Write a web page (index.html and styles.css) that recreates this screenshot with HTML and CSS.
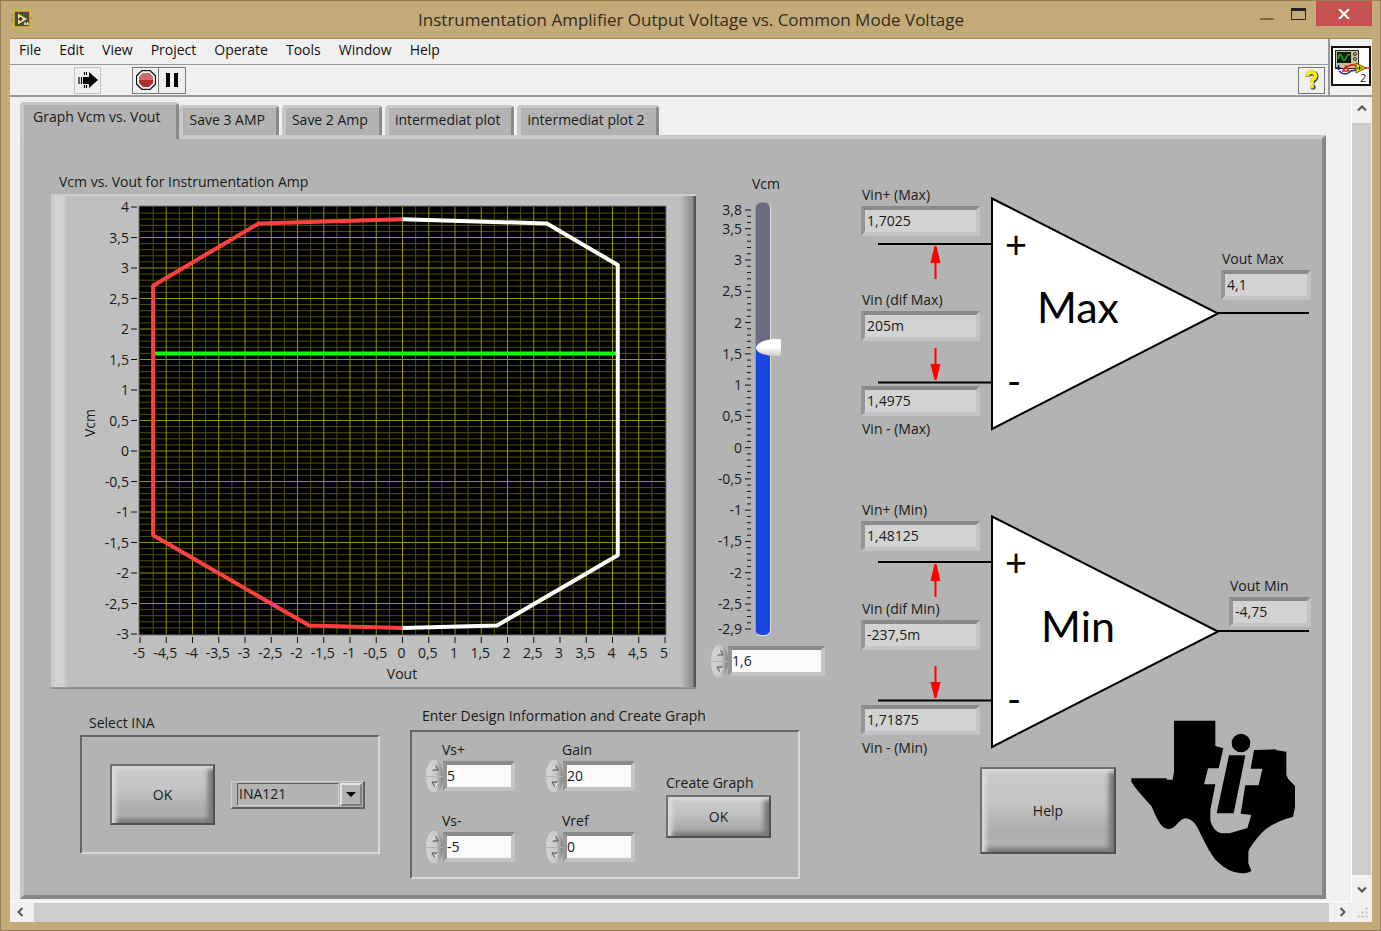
FILE: index.html
```html
<!DOCTYPE html>
<html lang="en">
<head>
  <meta charset="UTF-8" />
  <meta name="viewport" content="width=device-width, initial-scale=1.0" />
  <title>Instrumentation Amplifier Output Voltage vs. Common Mode Voltage</title>
  <link rel="stylesheet" href="styles.css">
</head>
<body>
  <header class="title-bar">
    <svg class="app-icon" viewBox="0 0 20 18" width="20" height="18" aria-hidden="true">
      <path d="M0 5h3M0 9h3M0 12h3M17 8h3" stroke="#5b8a8c" stroke-width="1.5" />
      <rect x="2" y="1" width="16" height="16" fill="#4a4a48" stroke="#e9b824" stroke-width="1.5" />
      <path d="M6 3.500v11l9-5.500z" fill="#f3dc83" />
      <path d="M6.500 9h4M8.500 7v4" stroke="#222" stroke-width="1.500" />
      <path d="M12 14h5M13 12v3M15.500 12v3" stroke="#fff3b0" />
    </svg>
    <h1>Instrumentation Amplifier Output Voltage vs. Common Mode Voltage</h1>
    <div class="window-buttons">
      <button class="win-btn" aria-label="Minimize"><svg width="14" height="12" viewBox="0 0 14 12"><path d="M0 11h14" stroke="#7d6a45" stroke-width="2" /></svg></button>
      <button class="win-btn" aria-label="Maximize"><svg width="15" height="12" viewBox="0 0 15 12"><path d="M.5 1v10.500h14V1" fill="none" stroke="#222" /><path d="M0 1.500h15" stroke="#222" stroke-width="3" /></svg></button>
      <button class="win-btn close" aria-label="Close"><svg width="12" height="10" viewBox="0 0 12 10"><path d="M1 0l10 10M11 0L1 10" stroke="#fff" stroke-width="2.200" /></svg></button>
    </div>
  </header>

  <div class="client">
    <div class="top-area">
      <div class="bars">
        <nav class="menu-bar">
          <a href="#">File</a>
          <a href="#">Edit</a>
          <a href="#">View</a>
          <a href="#">Project</a>
          <a href="#">Operate</a>
          <a href="#">Tools</a>
          <a href="#">Window</a>
          <a href="#">Help</a>
        </nav>
        <div class="toolbar">
          <button class="tool run" aria-label="Run">
            <svg width="20" height="18" viewBox="0 0 20 18"><path d="M1 6v7M3.500 6v7M6.500 1v3M8.500 1v3M6.500 14v3M8.500 14v3" stroke="#000" stroke-width="1.200" /><path d="M5 6h6V1l9 8-9 8v-4H5z" /></svg>
          </button>
          <div class="tool-pair">
            <button class="tool" aria-label="Abort">
              <svg width="20" height="20" viewBox="0 0 20 20"><path d="M6 .5h8L19.500 6v8L14 19.500H6L.5 14V6z" fill="#fff" stroke="#111" stroke-width="1.300" /><path d="M7 3h6l4 4v6l-4 4H7l-4-4V7z" fill="#b02d2d" /><path d="M7 3h6l4 4v3H3V7z" fill="#d26a6a" /></svg>
            </button>
            <button class="tool" aria-label="Pause">
              <svg width="12" height="14" viewBox="0 0 12 14"><path d="M0 0h4v14H0zM8 0h4v14H8z" /></svg>
            </button>
          </div>
          <button class="tool help-tool" aria-label="Context help">
            <svg width="14" height="20" viewBox="0 0 14 20"><path d="M3 6.500Q3 3 7 3t4 3.500Q11 9 8 10.500L7.500 13" fill="none" stroke="#444" stroke-width="5" /><circle cx="8" cy="17" r="2.600" fill="#444" /><path d="M2.500 6Q2.500 2.300 6.500 2.300T10.500 6Q10.500 8.500 7 10v3" fill="none" stroke="#f8ee00" stroke-width="3.500" /><circle cx="7" cy="16.500" r="2" fill="#f8ee00" /></svg>
          </button>
        </div>
      </div>
      <div class="vi-cell">
        <svg class="vi-icon" width="40" height="40" viewBox="0 0 40 40" role="img" aria-label="VI icon 2">
          <rect x="1" y="1" width="38" height="38" fill="#fff" stroke="#111" stroke-width="2" />
          <rect x="4.500" y="4.500" width="23" height="18" fill="#c9c39a" stroke="#222" />
          <rect x="6" y="6" width="14" height="11" fill="#0b1a0b" />
          <path d="M7 13q2-8 4-2t4 1 4-3" fill="none" stroke="#1fae35" stroke-width="1.500" />
          <circle cx="24" cy="8" r="1.500" fill="none" stroke="#333" /><circle cx="24" cy="13" r="1.500" fill="none" stroke="#333" />
          <path d="M5 22h5M7.500 19v5" stroke="#11118a" stroke-width="1.500" />
          <path d="M8 25q6 6 12 0l5-1" fill="none" stroke="#2020a0" stroke-width="1.500" />
          <path d="M12 25l3-5 3 5zM15 22q5-5 10-2M33 22h6" fill="none" stroke="#e02020" stroke-width="1.500" />
          <path d="M25 17v10l10-5z" fill="#f0e000" stroke="#5a5200" /><path d="M26 22h5M28.500 20v4" stroke="#222" />
          <text x="29" y="36">2</text>
        </svg>
      </div>
    </div>

    <div class="workspace">
      <main class="canvas">
        <div class="tabs" role="tablist">
          <button class="tab active" role="tab" aria-selected="true">Graph Vcm vs. Vout</button>
          <button class="tab" role="tab">Save 3 AMP</button>
          <button class="tab" role="tab">Save 2 Amp</button>
          <button class="tab" role="tab">intermediat plot</button>
          <button class="tab" role="tab">intermediat plot 2</button>
        </div>

        <div class="panel">
          <div class="left-col">
            <div class="graph-row">
              <section class="graph">
                <h2>Vcm vs. Vout for Instrumentation Amp</h2>
                <div class="graph-frame">
                  <svg id="plot" viewBox="0 0 613 491" role="img" aria-label="Vcm vs. Vout"></svg>
                </div>
              </section>
              <section class="vcm">
                <label class="vcm-label" for="vcmSlider">Vcm</label>
                <div class="slider">
                  <svg id="scale" width="44" height="442" viewBox="0 -4 44 442" aria-hidden="true"></svg>
                  <input type="range" id="vcmSlider" min="-2.9" max="3.8" step="0.1" value="1.6">
                </div>
                <div class="number">
                  <div class="spin">
                    <button aria-label="Increase"><svg width="8" height="7" viewBox="0 0 8 7"><path class="lo" d="M1 6h6L4.500 1" /><path class="hi" d="M1 6l3-5" /></svg></button>
                    <button aria-label="Decrease"><svg width="8" height="7" viewBox="0 0 8 7"><path class="lo" d="M7 1H1l3 5" /><path class="hi" d="M4 6l3-5" /></svg></button>
                  </div>
                  <input type="text" aria-label="Vcm value" id="vcmValue" value="1,6">
                </div>
              </section>
            </div>

            <div class="group-row">
              <section class="group select-group">
                <h2>Select INA</h2>
                <div class="group-box select-box">
                  <button class="push">OK</button>
                  <div class="ring">
                    <select aria-label="Select INA">
                      <option>INA121</option>
                    </select>
                    <span class="ring-arrow" aria-hidden="true"></span>
                  </div>
                </div>
              </section>

              <section class="group design-group">
                <h2>Enter Design Information and Create Graph</h2>
                <div class="group-box design-box">
                  <div class="control">
                    <label for="vsPlus">Vs+</label>
                    <div class="number">
                      <div class="spin">
                        <button aria-label="Increase"><svg width="8" height="7" viewBox="0 0 8 7"><path class="lo" d="M1 6h6L4.500 1" /><path class="hi" d="M1 6l3-5" /></svg></button>
                        <button aria-label="Decrease"><svg width="8" height="7" viewBox="0 0 8 7"><path class="lo" d="M7 1H1l3 5" /><path class="hi" d="M4 6l3-5" /></svg></button>
                      </div>
                      <input type="text" id="vsPlus" value="5">
                    </div>
                  </div>
                  <div class="control">
                    <label for="gain">Gain</label>
                    <div class="number">
                      <div class="spin">
                        <button aria-label="Increase"><svg width="8" height="7" viewBox="0 0 8 7"><path class="lo" d="M1 6h6L4.500 1" /><path class="hi" d="M1 6l3-5" /></svg></button>
                        <button aria-label="Decrease"><svg width="8" height="7" viewBox="0 0 8 7"><path class="lo" d="M7 1H1l3 5" /><path class="hi" d="M4 6l3-5" /></svg></button>
                      </div>
                      <input type="text" id="gain" value="20">
                    </div>
                  </div>
                  <div class="create">
                    <label for="createBtn">Create Graph</label>
                    <button class="push" id="createBtn">OK</button>
                  </div>
                  <div class="control">
                    <label for="vsMinus">Vs-</label>
                    <div class="number">
                      <div class="spin">
                        <button aria-label="Increase"><svg width="8" height="7" viewBox="0 0 8 7"><path class="lo" d="M1 6h6L4.500 1" /><path class="hi" d="M1 6l3-5" /></svg></button>
                        <button aria-label="Decrease"><svg width="8" height="7" viewBox="0 0 8 7"><path class="lo" d="M7 1H1l3 5" /><path class="hi" d="M4 6l3-5" /></svg></button>
                      </div>
                      <input type="text" id="vsMinus" value="-5">
                    </div>
                  </div>
                  <div class="control">
                    <label for="vref">Vref</label>
                    <div class="number">
                      <div class="spin">
                        <button aria-label="Increase"><svg width="8" height="7" viewBox="0 0 8 7"><path class="lo" d="M1 6h6L4.500 1" /><path class="hi" d="M1 6l3-5" /></svg></button>
                        <button aria-label="Decrease"><svg width="8" height="7" viewBox="0 0 8 7"><path class="lo" d="M7 1H1l3 5" /><path class="hi" d="M4 6l3-5" /></svg></button>
                      </div>
                      <input type="text" id="vref" value="0">
                    </div>
                  </div>
                </div>
              </section>
            </div>
          </div>

          <div class="right-col">
            <section class="amp amp-max">
              <svg class="amp-art" height="256" viewBox="0 0 450 256" aria-hidden="true">
                <path class="wire" d="M17 60H131M17 198.500H131M357 129H448" />
                <path class="triangle" d="M131 14.500V245L357 129.500z" />
                <path class="arrow" d="M73.500 95V79h-4l4-17h2l4 17h-4v16zM73.500 164v16h-4l4 16h2l4-16h-4v-16z" />
                <text class="sign" x="155" y="74" text-anchor="middle">+</text>
                <text class="sign" x="153" y="211" text-anchor="middle">-</text>
                <text class="amp-name" x="217" y="139" text-anchor="middle">Max</text>
              </svg>
              <div class="amp-in">
                <div class="field"><label for="vinPMax">Vin+ (Max)</label><input readonly type="text" id="vinPMax" value="1,7025"></div>
                <div class="field"><label for="difMax">Vin (dif Max)</label><input readonly type="text" id="difMax" value="205m"></div>
                <div class="field below"><label for="vinMMax">Vin - (Max)</label><input readonly type="text" id="vinMMax" value="1,4975"></div>
              </div>
              <div class="amp-out">
                <div class="field"><label for="voutMax">Vout Max</label><input readonly type="text" id="voutMax" value="4,1"></div>
              </div>
            </section>

            <section class="amp amp-min">
              <svg class="amp-art" height="256" viewBox="0 0 450 256" aria-hidden="true">
                <path class="wire" d="M17 60H131M17 198.500H131M357 129H448" />
                <path class="triangle" d="M131 14.500V245L357 129.500z" />
                <path class="arrow" d="M73.500 95V79h-4l4-17h2l4 17h-4v16zM73.500 164v16h-4l4 16h2l4-16h-4v-16z" />
                <text class="sign" x="155" y="74" text-anchor="middle">+</text>
                <text class="sign" x="153" y="211" text-anchor="middle">-</text>
                <text class="amp-name" x="217" y="140" text-anchor="middle">Min</text>
              </svg>
              <div class="amp-in">
                <div class="field"><label for="vinPMin">Vin+ (Min)</label><input readonly type="text" id="vinPMin" value="1,48125"></div>
                <div class="field"><label for="difMin">Vin (dif Min)</label><input readonly type="text" id="difMin" value="-237,5m"></div>
                <div class="field below"><label for="vinMMin">Vin - (Min)</label><input readonly type="text" id="vinMMin" value="1,71875"></div>
              </div>
              <div class="amp-out">
                <div class="field"><label for="voutMin">Vout Min</label><input readonly type="text" id="voutMin" value="-4,75"></div>
              </div>
            </section>

            <div class="help-row">
              <button class="push help-btn">Help</button>
              <svg class="logo" width="165" height="154" viewBox="514 60 495 462" role="img" aria-label="Texas Instruments">
                <path d="M643 62H767V138L791 145 777 205H745L733 253H767L752 330V362Q760 393 785 400H810L863 384 875 345 843 341 857 256H897L908 206H873L883 150 945 148 952 151 980 155V225L986 238 1006 258V320L1000 350Q935 368 905 400 870 440 866 455V490L875 512Q865 520 845 520 805 518 768 480C745 450 730 415 712 380Q697 356 678 355C655 357 650 387 628 387C603 387 592 355 575 318Q540 280 525 260L515 245V235H620L622 239H639L643 215z" />
                <path d="M808 166H857L822 340H771z" />
                <circle cx="844" cy="129" r="28" />
              </svg>
            </div>
          </div>
        </div>
      </main>

      <div class="scroll vertical" aria-hidden="true">
        <svg width="10" height="8" viewBox="0 0 10 8"><path d="M1 6.500l4-4 4 4" /></svg>
        <div class="thumb"></div>
        <svg width="10" height="8" viewBox="0 0 10 8"><path d="M1 1.500l4 4 4-4" /></svg>
      </div>
    </div>

    <div class="scroll horizontal" aria-hidden="true">
      <svg width="8" height="10" viewBox="0 0 8 10"><path d="M6.500 1l-4 4 4 4" /></svg>
      <div class="thumb"></div>
      <svg width="8" height="10" viewBox="0 0 8 10"><path d="M1.500 1l4 4-4 4" /></svg>
      <svg class="grip" width="11" height="11" viewBox="0 0 11 11"><path d="M8 0h3v3H8zM4 4h3v3H4zM8 4h3v3H8zM0 8h3v3H0zM4 8h3v3H4zM8 8h3v3H8z" /></svg>
    </div>
  </div>

  <script>
    const SVG = "http://www.w3.org/2000/svg";

    function add(parent, tag, attrs, text) {
      const el = document.createElementNS(SVG, tag);
      for (const key in attrs) el.setAttribute(key, attrs[key]);
      if (text !== undefined) el.textContent = text;
      parent.appendChild(el);
      return el;
    }

    function comma(n) {
      return String(Math.round(n * 10) / 10).replace(".", ",");
    }

    // Graph: Vout on x (-5..5), Vcm on y (-3..4)
    const plot = document.getElementById("plot");
    const left = 73, top_ = 11, width = 525, height = 427;
    const px = v => left + (v + 5) * width / 10;
    const py = v => top_ + (4 - v) * height / 7;

    add(plot, "rect", { class: "plot-bg", x: left - 1, y: top_ - 1, width: width + 2, height: height + 2 });

    for (let i = 0; i <= 40; i++) {
      const x = px(-5 + i / 4);
      if (i % 2) add(plot, "path", { class: "minor", d: `M${x} ${top_}v${height}` });
    }
    for (let i = 0; i <= 70; i++) {
      const y = py(4 - i / 10);
      if (i % 5) add(plot, "path", { class: "minor", d: `M${left} ${y}h${width}` });
    }
    for (let v = -5; v <= 5; v += 0.5) {
      const x = px(v);
      if (v > -5 && v < 5) add(plot, "path", { class: "major", d: `M${x} ${top_}v${height}` });
      add(plot, "path", { class: "tick", d: `M${x} ${top_ + height + 3}v6` });
      add(plot, "text", { x: x - 1, y: top_ + height + 24, "text-anchor": "middle" }, comma(v));
    }
    for (let v = -3; v <= 4; v += 0.5) {
      const y = py(v);
      if (v > -3 && v < 4) add(plot, "path", { class: "major", d: `M${left} ${y}h${width}` });
      add(plot, "path", { class: "tick", d: `M${left - 9} ${y}h6` });
      add(plot, "text", { x: left - 11, y: y + 5, "text-anchor": "end" }, comma(v));
    }
    add(plot, "text", { x: 335, y: 483, "text-anchor": "middle" }, "Vout");
    add(plot, "text", { transform: "translate(28 227) rotate(-90)", "text-anchor": "middle" }, "Vcm");

    const curves = [
      ["green", [[-4.75, 1.6], [4.1, 1.6]]],
      ["red", [[0, 3.8], [-2.74, 3.73], [-4.75, 2.71], [-4.75, -1.38], [-1.78, -2.86], [0, -2.9]]],
      ["white", [[0, 3.8], [2.75, 3.73], [4.1, 3.05], [4.1, -1.71], [1.8, -2.86], [0, -2.9]]]
    ];
    curves.forEach(([name, pts]) => {
      add(plot, "polyline", { class: "curve " + name, points: pts.map(p => px(p[0]) + "," + py(p[1])).join(" ") });
    });

    // Slider scale
    const scale = document.getElementById("scale");
    const sy = v => 8 + (3.8 - v) * 419 / 6.7;
    for (let i = -29; i <= 38; i++) {
      const v = i / 10;
      const labelled = i % 5 === 0 || i === 38 || i === -29;
      add(scale, "path", { class: "tick", d: `M${labelled ? 34 : 36} ${sy(v)}H40` });
      if (labelled) add(scale, "text", { x: 31, y: sy(v) + 5, "text-anchor": "end" }, comma(v));
    }

    const slider = document.getElementById("vcmSlider");
    const vcmValue = document.getElementById("vcmValue");
    slider.addEventListener("input", () => {
      const v = Number(slider.value);
      vcmValue.value = comma(v);
      slider.style.setProperty("--fill", (v + 2.9) / 6.7 * 100 + "%");
    });
    slider.dispatchEvent(new Event("input"));
  </script>
</body>
</html>
```
FILE: styles.css
```css
* {
  box-sizing: border-box;
}

body {
  margin: 0;
  min-height: 100vh;
  display: flex;
  flex-direction: column;
  background-color: #c3ab79;
  border: 1px solid #947e58;
  padding: 0 8px 8px 9px;
  font-family: "Open Sans", "Noto Sans", sans-serif;
  font-size: 14px;
  line-height: 22px;
  color: #1a1a1a;
}

h1, h2 {
  margin: 0;
  font-size: 14px;
  font-weight: normal;
}

button, input, select {
  font: inherit;
  color: inherit;
  margin: 0;
}

button {
  padding: 0;
}

svg {
  display: block;
}

svg text {
  font-size: 14px;
  fill: #1a1a1a;
}

/* Title bar */
.title-bar {
  height: 37px;
  display: grid;
  grid-template-columns: 128px 1fr 128px;
}

.app-icon {
  margin: 9px 0 0 2px;
}

.title-bar h1 {
  font-size: 17px;
  line-height: 38px;
  text-align: center;
  white-space: nowrap;
  color: #332c1d;
}

.window-buttons {
  display: flex;
  justify-content: flex-end;
  align-items: flex-start;
}

.win-btn {
  width: 32px;
  height: 25px;
  padding-right: 3px;
  border: none;
  background: none;
  display: flex;
  justify-content: center;
  align-items: center;
}

.win-btn.close {
  width: 56px;
  padding-right: 0;
  background-color: #c75050;
}

/* Client area */
.client {
  flex: 1;
  display: flex;
  flex-direction: column;
  background-color: #f0f0f0;
  border-top: 1px solid #a08b60;
}

.top-area {
  display: flex;
  height: 58px;
  border-bottom: 2px solid #999;
}

.bars {
  flex: 1;
}

.menu-bar {
  display: flex;
  gap: 18px;
  height: 26px;
  padding: 0 9px;
  border-bottom: 1px solid #999;
}

.menu-bar a {
  color: #111;
  text-decoration: none;
}

.toolbar {
  display: flex;
  align-items: center;
  height: 30px;
  padding: 0 3px 0 64px;
}

.tool {
  width: 27px;
  height: 27px;
  border: 1px solid #777;
  background-color: #f0f0f0;
  display: flex;
  justify-content: center;
  align-items: center;
}

.tool.run {
  border-color: #c4c4c4;
}

.tool-pair {
  display: flex;
  margin-left: 31px;
}

.tool-pair .tool + .tool {
  border-left: none;
}

.help-tool {
  margin-left: auto;
}

.vi-cell {
  width: 44px;
  border-left: 2px solid #999;
  padding: 7px 1px;
}

.vi-icon text {
  font-size: 11px;
}

.workspace {
  flex: 1;
  display: flex;
}

.canvas {
  flex: 1;
  display: flex;
  flex-direction: column;
  padding: 5px 25px 2px 10px;
  border-right: 1px solid #fff;
  border-bottom: 1px solid #fff;
}

/* Tabs */
.tabs {
  display: flex;
  align-items: flex-end;
  gap: 3px;
  height: 33px;
}

.tab {
  height: 30px;
  padding: 0 11px 3px 6px;
  border: solid;
  border-width: 3px 3px 0 4px;
  border-color: #c8c8c8 #8a8a8a #b3b3b3 #c8c8c8;
  border-radius: 4px 4px 0 0;
  background-color: #b3b3b3;
  white-space: nowrap;
}

.tab.active {
  align-self: flex-start;
  height: 37px;
  padding: 0 16px 10px 9px;
  margin-right: -3px;
  position: relative;
}

.panel {
  flex: 1;
  display: grid;
  grid-template-columns: minmax(0, 1fr) 450px;
  column-gap: 36px;
  align-items: start;
  padding: 31px 11px 16px 27px;
  background-color: #b3b3b3;
  border: 4px solid;
  border-color: #c8c8c8 #868686 #868686 #c6c6c6;
}

/* Graph */
.graph-row {
  display: flex;
  gap: 15px;
}

.graph {
  flex: 1;
  min-width: 0;
}

.graph h2 {
  line-height: 24px;
  padding-left: 8px;
}

.graph-frame {
  padding: 2px 16px;
  background-color: #bfbfbf;
  background-image:
    linear-gradient(to bottom, #d2d2d2, #c8c8c8),
    linear-gradient(to bottom, #999, #888),
    linear-gradient(to right, #c8c8c8, #d4d4d4 40%, #d0d0d0 80%, #bfbfbf),
    linear-gradient(to right, #bfbfbf, #8c8c8c 80%, #555 90%);
  background-size: 100% 2px, 100% 2px, 16px 100%, 16px 100%;
  background-position: top, bottom, left, right;
  background-repeat: no-repeat;
}

#plot {
  width: 100%;
}

.plot-bg {
  fill: #000;
  stroke: #777;
}

.minor {
  stroke: #505008;
  stroke-width: 1;
}

.major {
  stroke: #949408;
  stroke-width: 1;
}

.tick {
  stroke: #111;
  stroke-width: 1;
}

.curve {
  fill: none;
  stroke-width: 4;
  stroke-linejoin: round;
}

.curve.red {
  stroke: #ff4040;
}

.curve.white {
  stroke: #fff;
}

.curve.green {
  stroke: #00ff00;
}

/* Vcm slider */
.vcm {
  width: 114px;
  padding-top: 3px;
}

.vcm-label {
  display: block;
  padding: 0 0 3px 41px;
}

.slider {
  display: flex;
  align-items: center;
  margin-bottom: 6px;
}

.slider input {
  --fill: 67%;
  appearance: none;
  writing-mode: vertical-lr;
  direction: rtl;
  width: 26px;
  height: 434px;
  background: none;
}

.slider input::-webkit-slider-runnable-track {
  width: 16px;
  height: 434px;
  margin-right: 10px;
  border-radius: 6px;
  border: 1px solid #999;
  border-right-color: #ddd;
  border-bottom-color: #ddd;
  background: linear-gradient(to top, #1a46e0 var(--fill), #6b6b84 var(--fill));
}

.slider input::-webkit-slider-thumb {
  appearance: none;
  width: 25px;
  height: 17px;
  border-radius: 20px 2px 2px 20px / 9px 2px 2px 8px;
  background: linear-gradient(#fff 50%, #e8e8e8 70%, #ccc);
}

/* Number controls */
.number {
  display: flex;
}

.spin {
  width: 17px;
  height: 32px;
  margin-top: -1px;
  display: flex;
  flex-direction: column;
  gap: 1px;
}

.spin button {
  flex: 1;
  border: none;
  display: flex;
  justify-content: center;
  align-items: center;
  background: linear-gradient(to right, #d4d4d4, #c8c8c8 60%, #808080);
  border-radius: 8px 8px 1px 1px / 15px 15px 1px 1px;
}

.spin button + button {
  border-radius: 1px 1px 8px 8px / 1px 1px 15px 15px;
}

.spin path {
  fill: none;
  stroke-width: 1;
}

.spin .lo {
  stroke: #4a4a4a;
}

.spin .hi {
  stroke: #e6e6e6;
}

.number input,
.field input {
  min-width: 0;
  height: 30px;
  padding: 0 0 1px 2px;
  border: 4px solid;
  border-color: #8a8a8a #c3c3c3 #c3c3c3 #959595;
  border-radius: 0;
  background-color: #fafafa;
}

.number input {
  flex: 1;
  padding-left: 0;
}

/* Groups under the graph */
.group-row {
  display: flex;
  align-items: flex-start;
  gap: 30px;
  padding: 15px 25px 0 29px;
}

.group h2 {
  line-height: 24px;
}

.select-group {
  flex: 300;
  padding-top: 7px;
}

.design-group {
  flex: 390;
}

.select-group h2 {
  padding-left: 9px;
}

.design-group h2 {
  padding: 0 0 2px 12px;
}

.group-box {
  border: 2px solid;
  border-color: #666 #d8d8d8 #d8d8d8 #666;
}

.select-box {
  display: flex;
  align-items: center;
  gap: 16px;
  height: 119px;
  padding-left: 28px;
}

.design-box {
  display: grid;
  grid-template-columns: 89px 89px 105px;
  column-gap: 31px;
  row-gap: 18px;
  height: 149px;
  padding: 7px 0 0 14px;
  align-content: start;
}

.control label {
  display: block;
  padding-left: 16px;
}

.create {
  grid-area: 1 / 3 / 3 / 4;
  padding-top: 32px;
}

.create label {
  display: block;
  line-height: 24px;
}

.push {
  width: 105px;
  height: 61px;
  border: 2px solid;
  border-color: #707070 #505050 #505050 #707070;
  background: linear-gradient(#cacaca, #c4c4c4 40%, #adadad 75%, #b4b4b4);
  box-shadow: inset 4px 3px 4px #dadada, inset -5px -4px 5px #757575;
}

.create .push {
  height: 43px;
}

.ring {
  display: flex;
  width: 134px;
  height: 28px;
  padding: 1px 1px 1px 5px;
  border: solid;
  border-width: 1px 2px 2px 1px;
  border-color: #d0d0d0 #606060 #606060 #d0d0d0;
}

.ring select {
  appearance: none;
  flex: 1;
  min-width: 0;
  padding: 0 0 2px 1px;
  line-height: 19px;
  border: 1px solid;
  border-color: #606060 #d0d0d0 #d0d0d0 #606060;
  border-radius: 0;
  background: none;
}

.ring-arrow {
  width: 22px;
  margin-left: 1px;
  border: 2px solid;
  border-color: #e4e4e4 #808080 #808080 #e4e4e4;
  background-color: #b3b3b3;
  display: flex;
  justify-content: center;
  align-items: center;
}

.ring-arrow::before {
  content: "";
  border: 5px solid transparent;
  border-top-color: #000;
  border-bottom: none;
}

/* Amplifiers */
.right-col {
  padding-top: 14px;
}

.amp {
  display: grid;
  grid-template-columns: 119px 1fr auto;
}

.amp-max {
  margin-bottom: 57px;
}

.amp-art {
  grid-area: 1 / 1 / 2 / 4;
  width: 100%;
}

.amp-min .amp-art {
  margin-top: 3px;
}

.amp-in {
  grid-area: 1 / 1 / 2 / 2;
}

.amp-out {
  grid-area: 1 / 3 / 2 / 4;
  padding-top: 64px;
  width: 90px;
}

.amp-min .amp-out {
  padding-top: 76px;
  width: 82px;
}

.field {
  display: flex;
  flex-direction: column;
}

.field input {
  width: 100%;
  background-color: #d2d2d2;
}

.field.below {
  flex-direction: column-reverse;
}

.field label {
  padding-left: 1px;
}

.field.below label {
  line-height: 26px;
}

.amp-max .field + .field {
  margin-top: 53px;
}

.amp-max .field.below {
  margin-top: 45px;
}

.amp-min .field + .field {
  margin-top: 47px;
}

.amp-min .field.below {
  margin-top: 55px;
}

.wire {
  stroke: #000;
  stroke-width: 2;
}

.triangle {
  fill: #fff;
  stroke: #000;
  stroke-width: 2;
}

.arrow {
  fill: #f00;
}

.amp-art .amp-name {
  font-family: Lato, sans-serif;
  font-size: 43px;
  fill: #000;
}

.amp-art .sign {
  font-family: Lato, sans-serif;
  font-size: 38px;
  fill: #000;
}

.help-row {
  display: flex;
  align-items: flex-end;
  gap: 15px;
  margin-top: -41px;
  padding-left: 119px;
}

.help-btn {
  width: 136px;
  height: 87px;
  margin-bottom: 20px;
}

/* Scroll bars */
.scroll {
  display: flex;
  align-items: center;
}

.scroll path {
  fill: none;
  stroke: #555;
  stroke-width: 2;
}

.scroll .thumb {
  flex: 1;
  background-color: #cdcdcd;
}

.vertical {
  flex-direction: column;
  width: 20px;
  gap: 11px;
  padding: 7px 1px 8px 0;
}

.vertical .thumb {
  width: 19px;
}

.horizontal {
  height: 20px;
  gap: 10px;
  padding: 0 4px 0 6px;
}

.horizontal .thumb {
  height: 19px;
}

.scroll .grip path {
  fill: #c0c0c0;
  stroke: #f0f0f0;
  stroke-width: 1;
}
```
